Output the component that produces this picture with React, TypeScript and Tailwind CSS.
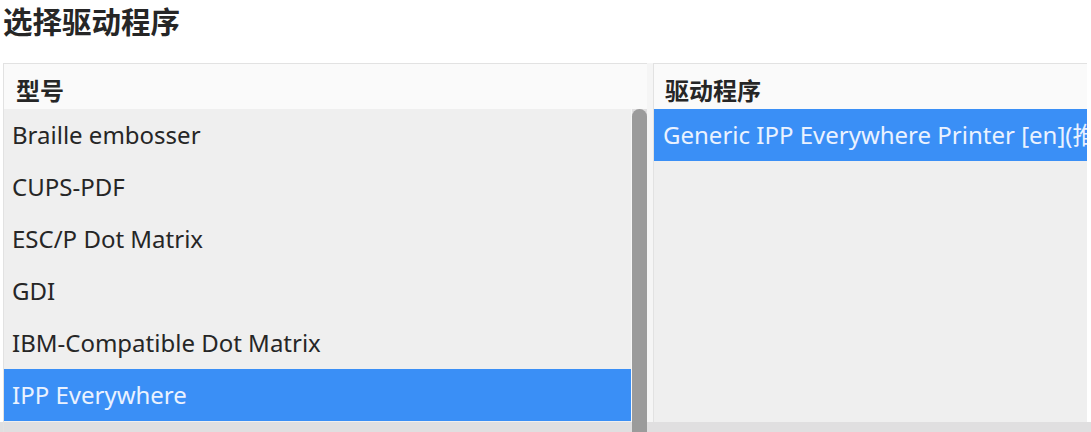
import React from "react";

const FONT = { fontFamily: '"Noto Sans", "Noto Sans CJK SC", sans-serif' };

const models = [
  "Braille embosser",
  "CUPS-PDF",
  "ESC/P Dot Matrix",
  "GDI",
  "IBM-Compatible Dot Matrix",
  "IPP Everywhere",
];

export default function App() {
  return (
    <div className="w-[1091px] h-[432px] bg-white overflow-hidden text-[#262626]" style={FONT}>
      <div className="h-[63px] pl-[3px] pt-[2px] text-[29.5px] font-bold leading-[40px]">选择驱动程序</div>
      <div className="flex h-[369px] bg-[#e0dfe0] items-start">
        <div className="w-[3px] h-[359px] bg-white" />
        <div className="w-[644px] h-[369px] flex flex-col border-l border-t border-[#e2e2e2]">
          <div className="h-[45px] shrink-0 bg-[#fafafa] pl-[12px] pt-[11px] text-[24px] font-bold leading-[32px]">型号</div>
          <div className="flex flex-1">
            <div className="w-[627px] h-[313px] bg-[#efefef] flex flex-col">
              {models.map((m, i) => {
                const sel = m === "IPP Everywhere";
                return (
                  <div
                    key={i}
                    className={
                      "h-[52px] flex items-center pl-[8px] text-[24px] whitespace-nowrap " +
                      (sel ? "bg-[#3a8ff6] text-[#eaf2ff]" : "")
                    }
                  >
                    {m}
                  </div>
                );
              })}
            </div>
            <div className="w-[1px] h-[313px] bg-[#f7f7f7]" />
            <div className="w-[15px] self-stretch bg-[#9b9b9b] rounded-t-full" />
          </div>
        </div>
        <div className="w-[6px] h-[359px] bg-[#f5f5f5]" />
        <div className="w-[434px] h-[359px] flex flex-col border-l border-t border-[#e2e2e2]">
          <div className="h-[45px] shrink-0 bg-[#fafafa] pl-[11px] pt-[11px] text-[24px] font-bold leading-[32px]">驱动程序</div>
          <div className="flex-1 bg-[#efefef]">
            <div className="h-[52px] flex items-center pl-[9px] text-[24px] bg-[#3a8ff6] text-[#eaf2ff] whitespace-nowrap overflow-hidden">
              Generic IPP Everywhere Printer [en](推荐)
            </div>
          </div>
        </div>
        <div className="w-[4px] h-[359px] bg-white" />
      </div>
    </div>
  );
}
